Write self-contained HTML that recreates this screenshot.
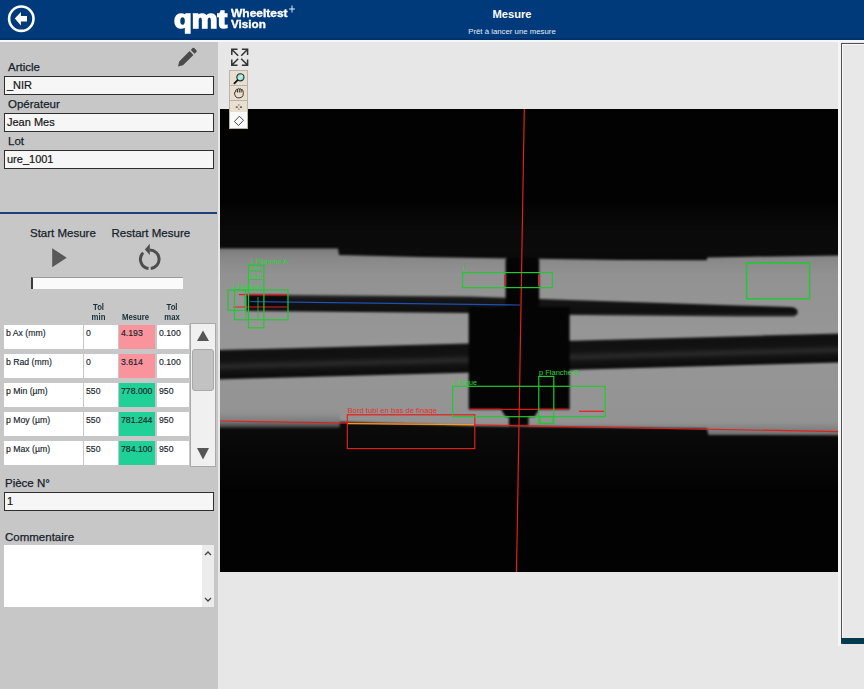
<!DOCTYPE html>
<html><head><meta charset="utf-8">
<style>
*{margin:0;padding:0;box-sizing:border-box}
html,body{width:864px;height:689px;overflow:hidden;background:#e7e7e7;font-family:"Liberation Sans",sans-serif;position:relative}
.a{position:absolute;white-space:nowrap}
#hdr{left:0;top:0;width:864px;height:40px;background:#013a7a}
#hdr2{left:0;top:38px;width:864px;height:2px;background:#02316c}
#wl{left:0;top:40px;width:864px;height:2px;background:#f4f8fa}
#lp{left:0;top:42px;width:218px;height:647px;background:#c7c7c7}
.lbl{font-size:11.5px;color:#16222a;left:8px;-webkit-text-stroke:0.25px #16222a}
.inp{left:4px;width:210px;height:19px;border:1.5px solid #2e2e2e;background:#f6f6f6;font-size:11px;color:#151515;padding-left:2px;line-height:17.5px;-webkit-text-stroke:0.2px #151515}
.cell{background:#fff;height:24px;font-size:8.7px;color:#17252c;padding-left:2px;line-height:17.5px;top:0;-webkit-text-stroke:0.15px #17252c}
.row{left:4px;width:186px;height:24px}
.th{font-size:8.8px;font-weight:bold;color:#163038;text-align:center;line-height:10px;transform:scaleX(0.88);transform-origin:50% 0}
</style></head><body>
<div id="hdr" class="a"></div>
<div id="hdr2" class="a"></div>
<div id="wl" class="a"></div>
<!-- back button -->
<svg class="a" style="left:0;top:0" width="40" height="40" viewBox="0 0 40 40">
<circle cx="21.3" cy="18.7" r="12.2" fill="none" stroke="#fff" stroke-width="2.6"/>
<path d="M14.8 18.6 L20.9 12 L20.9 16 L27 16 L27 21.4 L20.9 21.4 L20.9 25.4 Z" fill="#fff"/>
</svg>
<!-- logo -->
<div class="a" style="left:174px;top:-1px;font-size:25px;font-weight:bold;color:#fff;line-height:40px;letter-spacing:0px;-webkit-text-stroke:1.5px #fff;transform:scaleX(1.16);transform-origin:0 0">qmt</div>
<div class="a" style="left:231px;top:6.5px;font-size:10.8px;font-weight:bold;color:#fff;line-height:12px;-webkit-text-stroke:0.35px #fff;transform:scaleX(1.11);transform-origin:0 0">Wheeltest</div>
<div class="a" style="left:231px;top:17.5px;font-size:10.8px;font-weight:bold;color:#fff;line-height:12px;-webkit-text-stroke:0.35px #fff;transform:scaleX(1.08);transform-origin:0 0">Vision</div>
<svg class="a" style="left:288.5px;top:5px" width="8" height="8"><path d="M3 0.5 V7.5 M0 4 H6" stroke="#fff" stroke-width="0.9"/></svg>
<div class="a" style="left:412px;width:200px;top:7.5px;text-align:center;font-size:11.2px;font-weight:bold;color:#fff;line-height:12px">Mesure</div>
<div class="a" style="left:412px;width:200px;top:27.3px;text-align:center;font-size:7.8px;color:#e4ecf6;line-height:9px">Prêt à lancer une mesure</div>

<!-- left panel -->
<div id="lp" class="a"></div>
<svg class="a" style="left:175px;top:45px" width="24" height="24" viewBox="0 0 24 24">
<path d="M3 21.5 L4.2 16.5 L14.6 6.1 L18.4 9.9 L8 20.3 Z M15.8 4.9 L17.6 3.1 Q18.4 2.3 19.2 3.1 L21.4 5.3 Q22.2 6.1 21.4 6.9 L19.6 8.7 Z" fill="#4a4a4a"/>
</svg>
<div class="a lbl" style="top:60.5px">Article</div>
<div class="a inp" style="top:75.5px">_NIR</div>
<div class="a lbl" style="top:98px">Opérateur</div>
<div class="a inp" style="top:113px">Jean Mes</div>
<div class="a lbl" style="top:134.5px">Lot</div>
<div class="a inp" style="top:149.5px">ure_1001</div>
<div class="a" style="left:0;top:211.5px;width:217px;height:2.5px;background:#1f3f78"></div>

<div class="a" style="left:30px;top:226.5px;font-size:11.5px;color:#16222a;-webkit-text-stroke:0.25px #16222a">Start Mesure</div>
<div class="a" style="left:111.5px;top:226.5px;font-size:11.5px;color:#16222a;-webkit-text-stroke:0.25px #16222a">Restart Mesure</div>
<svg class="a" style="left:50px;top:246px" width="20" height="24"><path d="M2.2 2.2 L16.7 11.7 L2.2 21.3 Z" fill="#585858"/></svg>
<svg class="a" style="left:130px;top:240px" width="40" height="35" viewBox="130 240 40 35">
<path d="M149.8 250 A9.3 9.3 0 0 1 150.77 268.55 M148.5 268.5 A9.3 9.3 0 0 1 143.2 252.7" fill="none" stroke="#4e4e4e" stroke-width="3"/>
<path d="M149.8 243.8 L149.8 254.9 L144.9 249.4 Z" fill="#4e4e4e"/>
</svg>
<div class="a" style="left:31px;top:277px;width:152px;height:12px;background:#fafafa;border-top:1px solid #9a9a9a;border-left:2.5px solid #3c3c3c"></div>

<div class="a th" style="left:86px;top:301.5px;width:25px">Tol<br>min</div>
<div class="a th" style="left:117px;top:311.5px;width:37px">Mesure</div>
<div class="a th" style="left:157px;top:301.5px;width:30px">Tol<br>max</div>

<div class="a cell" style="left:4px;top:325px;width:79px">b Ax (mm)</div>
<div class="a cell" style="left:84px;top:325px;width:34px">0</div>
<div class="a cell" style="left:119px;top:325px;width:36px;background:#f9939c">4.193</div>
<div class="a cell" style="left:157px;top:325px;width:32px">0.100</div>
<div class="a cell" style="left:4px;top:354px;width:79px">b Rad (mm)</div>
<div class="a cell" style="left:84px;top:354px;width:34px">0</div>
<div class="a cell" style="left:119px;top:354px;width:36px;background:#f9939c">3.614</div>
<div class="a cell" style="left:157px;top:354px;width:32px">0.100</div>
<div class="a cell" style="left:4px;top:383px;width:79px">p Min (µm)</div>
<div class="a cell" style="left:84px;top:383px;width:34px">550</div>
<div class="a cell" style="left:119px;top:383px;width:36px;background:#1fd196">778.000</div>
<div class="a cell" style="left:157px;top:383px;width:32px">950</div>
<div class="a cell" style="left:4px;top:412px;width:79px">p Moy (µm)</div>
<div class="a cell" style="left:84px;top:412px;width:34px">550</div>
<div class="a cell" style="left:119px;top:412px;width:36px;background:#1fd196">781.244</div>
<div class="a cell" style="left:157px;top:412px;width:32px">950</div>
<div class="a cell" style="left:4px;top:441px;width:79px">p Max (µm)</div>
<div class="a cell" style="left:84px;top:441px;width:34px">550</div>
<div class="a cell" style="left:119px;top:441px;width:36px;background:#1fd196">784.100</div>
<div class="a cell" style="left:157px;top:441px;width:32px">950</div>
<div class="a" style="left:189.5px;top:323px;width:26.5px;height:143.5px;background:#f0f0f0;border:1.2px solid #a9a9a9"></div>
<div class="a" style="left:192px;top:349.4px;width:21.7px;height:41.2px;background:#c2c2c2;border-radius:3px;border:1px solid #a8a8a8"></div>
<svg class="a" style="left:195px;top:328px" width="16" height="16"><path d="M2 13 L8 2.5 L14 13 Z" fill="#555"/></svg>
<svg class="a" style="left:195px;top:446px" width="16" height="16"><path d="M2 2 L14 2 L8 13.5 Z" fill="#555"/></svg>
<div class="a lbl" style="top:476.5px;left:5px">Pièce N°</div>
<div class="a inp" style="top:492px;height:19px">1</div>
<div class="a lbl" style="top:530.5px;left:5px">Commentaire</div>
<div class="a" style="left:4px;top:545px;width:210px;height:62px;background:#fff"></div>
<div class="a" style="left:202px;top:545px;width:12px;height:62px;background:#ececec"></div>
<svg class="a" style="left:203px;top:549px" width="10" height="56"><path d="M2 6 L5 3 L8 6" fill="none" stroke="#444" stroke-width="1.3"/><path d="M2 49 L5 52 L8 49" fill="none" stroke="#444" stroke-width="1.3"/></svg>


<!-- camera -->
<svg class="a" style="left:220px;top:109px" width="618" height="463" viewBox="220 109 618 463">
<defs>
<linearGradient id="topHaze" x1="0" y1="0" x2="0" y2="1">
<stop offset="0" stop-color="#020202"/><stop offset="0.2" stop-color="#060606"/><stop offset="0.5" stop-color="#0a0a0a"/><stop offset="0.85" stop-color="#0b0b0b"/><stop offset="1" stop-color="#080808"/>
</linearGradient>
<linearGradient id="botHaze" x1="0" y1="0" x2="0" y2="1">
<stop offset="0" stop-color="#0c0c0c"/><stop offset="0.5" stop-color="#070707"/><stop offset="1" stop-color="#030303"/>
</linearGradient>
<linearGradient id="band" x1="0" y1="0" x2="0" y2="1">
<stop offset="0" stop-color="#7a7a7a"/><stop offset="0.05" stop-color="#888"/><stop offset="0.14" stop-color="#929292"/><stop offset="0.5" stop-color="#979797"/><stop offset="0.93" stop-color="#939393"/><stop offset="1" stop-color="#707070"/>
</linearGradient>
<linearGradient id="rod" gradientUnits="userSpaceOnUse" x1="0" y1="355.93" x2="0" y2="385.33" gradientTransform="skewY(-1.543)">
<stop offset="0" stop-color="#1a1a1a"/><stop offset="0.12" stop-color="#101010"/><stop offset="0.38" stop-color="#131313"/><stop offset="0.57" stop-color="#2a2a2a"/><stop offset="0.72" stop-color="#141414"/><stop offset="0.92" stop-color="#0c0c0c"/><stop offset="1" stop-color="#141414"/>
</linearGradient>
<linearGradient id="needle" x1="0" y1="0" x2="0" y2="1">
<stop offset="0" stop-color="#383838"/><stop offset="0.2" stop-color="#161616"/><stop offset="0.8" stop-color="#0e0e0e"/><stop offset="1" stop-color="#2e2e2e"/>
</linearGradient>
</defs>
<filter id="bl" color-interpolation-filters="sRGB" filterUnits="userSpaceOnUse" x="210" y="100" width="640" height="480"><feGaussianBlur stdDeviation="1"/></filter>
<rect x="210" y="100" width="640" height="480" fill="#020202"/>
<g filter="url(#bl)">
<rect x="210" y="200" width="640" height="63" fill="url(#topHaze)"/>
<rect x="210" y="420" width="640" height="70" fill="url(#botHaze)"/>
<polygon points="212,248.4 338,248.6 339,255 420,257 620,260 706.6,260.3 707.5,257.5 846,255.3 846,435.2 708.4,434.9 707,428.6 475,426 340,421.7 339.5,427.5 212,427.5" fill="url(#band)"/>
<linearGradient id="lshade" x1="0" y1="0" x2="0" y2="1"><stop offset="0" stop-color="#000" stop-opacity="0"/><stop offset="0.6" stop-color="#000" stop-opacity="0.15"/><stop offset="1" stop-color="#000" stop-opacity="0.55"/></linearGradient>
<rect x="210" y="412" width="130" height="15.5" fill="url(#lshade)"/>
<!-- thick rod -->
<polygon points="212,350.2 846,333.3 846,362.4 212,379.6" fill="url(#rod)"/>
<!-- needle -->
<polygon points="246,294.5 470,296.5 570,300 738,305.5 790,307 794,307.4 797.5,310 797.5,314 794,316.5 790,316.5 738,316.5 570,315 470,313 246,311" fill="url(#needle)"/>
<rect x="246" y="295" width="42" height="12" fill="#0a0a0a"/>
<!-- probe -->
<path d="M505.6 261 Q505.6 258 508.6 258 L536.2 258 Q539.2 258 539.2 261 L539.2 307.3 L569.6 307.3 L569.6 409.6 L539 409.6 L534.4 416.7 L528.5 416.7 L528.5 425.4 L508.9 425.4 L508.9 416.7 L505.7 416.7 L501 409.6 L468.7 409.6 L468.7 307.3 L505.6 307.3 Z" fill="#040404"/>
</g>
<!-- overlays -->
<g fill="none" stroke-width="1.2">
<path d="M524.3 109 L516.5 572" stroke="#e0201c"/>
<path d="M220 421 L475 425 L540 426.2 L838 431.6" stroke="#e0201c"/>
<rect x="347.3" y="414.8" width="127.5" height="33.8" stroke="#e0201c"/>
<path d="M348 423.6 L474 424.6" stroke="#f0a020" stroke-width="1.4"/>
<path d="M470 409.3 L568 409.3" stroke="#d82020"/>
<path d="M579 411.3 L604 411.3" stroke="#e02020"/>
<path d="M250 301.5 L520 305" stroke="#1f4fb4"/>
<path d="M239 294.7 L287 294.7 M233 307 L287 307" stroke="#e02020"/>
<rect x="746.6" y="262.8" width="63" height="36" stroke="#22c833" stroke-width="1.5"/>
<rect x="462.5" y="272.6" width="89.8" height="15" stroke="#22c833"/>
<path d="M504.8 275 V286 M538.6 275 V286" stroke="#e02020"/>
<rect x="452.6" y="386.3" width="152.6" height="30.4" stroke="#22c833"/>
<rect x="538.8" y="376.4" width="15" height="47" stroke="#22c833"/>
<rect x="540" y="416.7" width="13" height="6.8" stroke="#22c833"/>
<rect x="248.5" y="265.1" width="15.4" height="62.7" stroke="#22c833"/>
<rect x="234.5" y="290" width="53.5" height="29.7" stroke="#22c833"/>
<rect x="228" y="290" width="17.5" height="20.4" stroke="#22c833"/>
<path d="M250 279.5 H262 M250 271 H262" stroke="#22c833" stroke-width="0.8"/>
<path d="M246 297 V318 M258 297 V318" stroke="#22c833" stroke-width="0.8"/>
</g>
<g font-family="Liberation Sans" font-size="7px" fill="#2ad63a">
<text x="250" y="263.5" textLength="38" lengthAdjust="spacingAndGlyphs">1 Flanche A</text>
<text x="251" y="270" font-size="5px" textLength="9" lengthAdjust="spacingAndGlyphs">bAx</text>
<text x="249" y="278" font-size="5px" textLength="12" lengthAdjust="spacingAndGlyphs">bSup</text>
<text x="232" y="289" textLength="30" lengthAdjust="spacingAndGlyphs">1 Flanche</text>
<text x="463" y="270">L</text>
<text x="453" y="384.5" textLength="24" lengthAdjust="spacingAndGlyphs">L Pique</text>
<text x="539" y="375" textLength="40" lengthAdjust="spacingAndGlyphs">p Flanche B</text>
</g>
<text x="347.5" y="412.8" font-family="Liberation Sans" font-size="8px" fill="#e8302a" textLength="89.5" lengthAdjust="spacingAndGlyphs">Bord tubi en bas de finage</text>
</svg>

<!-- right panel -->
<div class="a" style="left:838px;top:41px;width:3px;height:605px;background:#f6f6f6"></div>
<div class="a" style="left:841px;top:43px;width:23px;height:601px;background:#e8e8e8;border-left:1.3px solid #505050;border-top:1.3px solid #505050;box-shadow:inset 1px 1px 0 #fafafa"></div>
<div class="a" style="left:841px;top:637.5px;width:23px;height:6.5px;background:#043a50;border-radius:0 0 0 2px"></div>
<!-- toolbar -->
<svg class="a" style="left:229px;top:46px" width="22" height="22" viewBox="229 46 22 22">
<g fill="none" stroke="#333" stroke-width="1.5">
<path d="M231.8 55 V49.3 H237.5 M232.2 49.7 L238.2 55.7"/>
<path d="M247.6 55 V49.3 H241.9 M247.2 49.7 L241.2 55.7"/>
<path d="M231.8 59.5 V65.2 H237.5 M232.2 64.8 L238.2 58.8"/>
<path d="M247.6 59.5 V65.2 H241.9 M247.2 64.8 L241.2 58.8"/>
</g></svg>
<div class="a" style="left:229px;top:70px;width:19px;height:58.5px;background:#b8b2a8"></div>
<div class="a" style="left:230px;top:70.6px;width:17.3px;height:14.6px;background:#e9dfd0"></div>
<div class="a" style="left:230px;top:85.6px;width:17.3px;height:14.9px;background:#e9dfd0"></div>
<div class="a" style="left:230px;top:100.9px;width:17.3px;height:10.9px;background:#e9dfd0"></div>
<div class="a" style="left:230px;top:112.1px;width:17.3px;height:15.8px;background:#fafafa"></div>
<svg class="a" style="left:229px;top:69px" width="20" height="60" viewBox="229 69 20 60">
<defs><linearGradient id="lens" x1="0" y1="0" x2="1" y2="1"><stop offset="0" stop-color="#5ccab8"/><stop offset="0.5" stop-color="#c8efe8"/><stop offset="1" stop-color="#50bfae"/></linearGradient></defs>
<circle cx="240.4" cy="77.3" r="3.6" fill="url(#lens)" stroke="#24302e" stroke-width="1.1"/>
<path d="M237.6 80.2 L234.4 83.4" stroke="#111" stroke-width="1.8" stroke-linecap="round"/>
<path d="M236 97 Q234.3 95 234.5 92.5 Q234.8 91.3 235.8 92 L235.8 90 Q236.6 88.8 237.4 90 L237.5 89 Q238.4 87.8 239.3 89 L239.3 89.1 Q240.2 88 241.1 89.2 L241.1 90 Q242 89 242.9 90.2 L243.3 93.5 Q243.3 96 241.8 97.1 Q239.8 98.2 237.8 97.8 Q236.6 97.6 236 97 Z M237.45 90 V92.5 M239.3 89 V92.5 M241.1 89.5 V92.5" fill="none" stroke="#2a2218" stroke-width="0.9"/>
<path d="M235.8 107.1 H237.7 M239.9 107.1 H242" stroke="#4a3a2a" stroke-width="1.3"/>
<path d="M238.8 104.2 V105.7 M238.8 108.5 V110" stroke="#8a7a6a" stroke-width="1.1"/>
<path d="M239.4 116.2 L243.5 120.3 L238.5 125.5 L234.4 121.5 Z" fill="none" stroke="#3a3a3a" stroke-width="0.9"/>
</svg>
</body></html>
